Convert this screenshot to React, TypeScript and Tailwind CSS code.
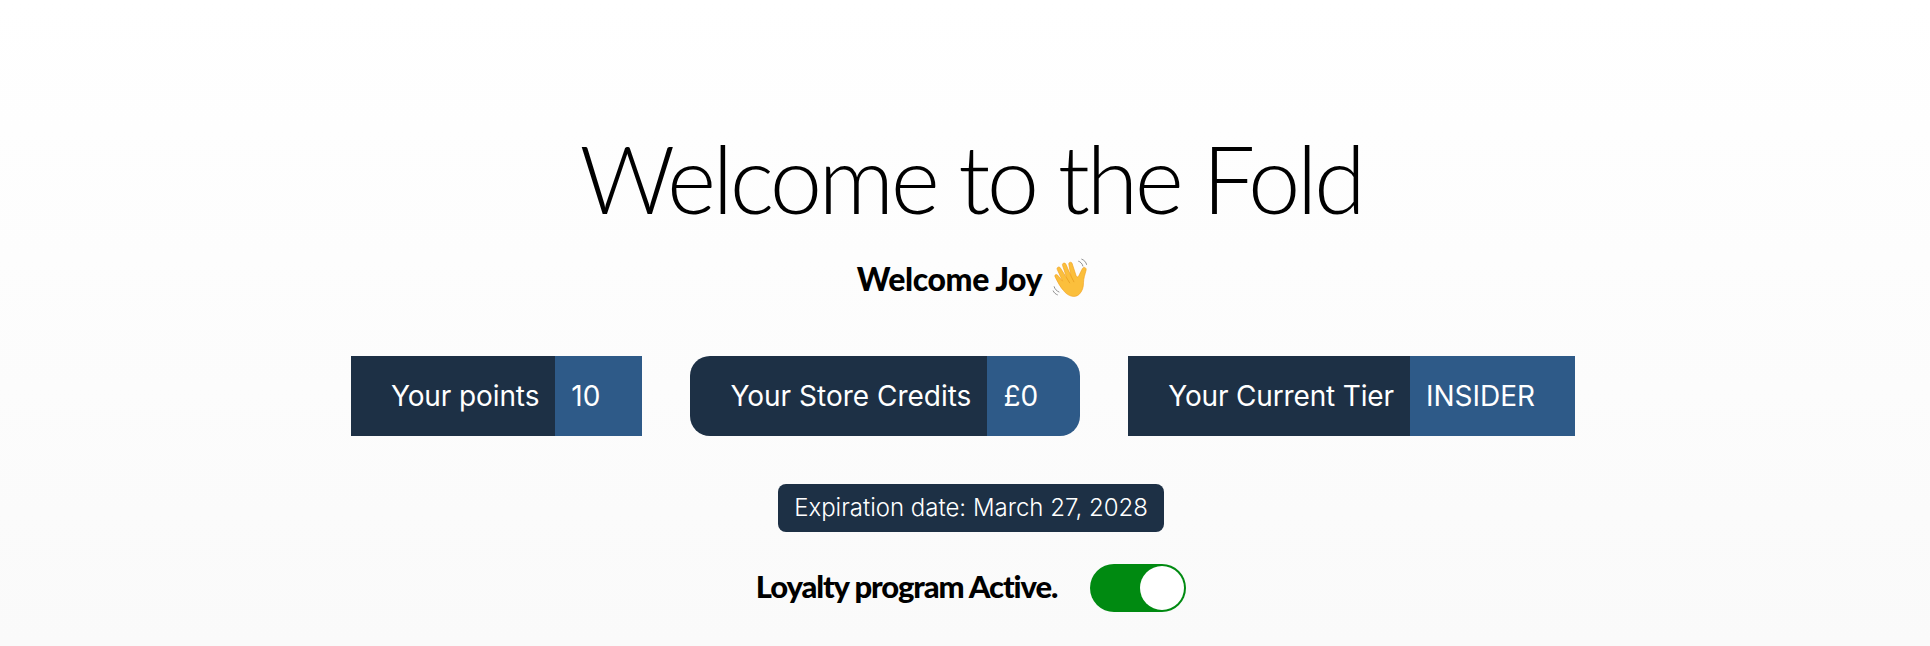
import React from 'react';

function WaveHand() {
  return (
    <svg viewBox="0 0 40 40" className="w-[42px] h-[42px] ml-[10px]" aria-hidden="true">
      <path d="M11 31c-3-3-6-9-8-13-1-2 1-3 2.500-1.500L10 22 5 11c-1-2 2-3.500 3-1.500L14 19 10 7c-.6-2.200 2.500-3 3.300-1L18 17l-2-11c-.4-2.200 2.600-2.800 3.200-.7L23 17c1 2 2 1 3-1l3-6c1-2 4-1 3.500 1.500-1 4-2.500 8-2.500 12 0 4-1 8-4 11-4 4-11 2-15-3.500z" fill="#fbbf3c" stroke="#f0a020" strokeWidth="0.6" />
      <path d="M14 19l3 5M18 17l3 6" stroke="#e8a020" strokeWidth="0.8" fill="none" />
      <path d="M25 3c2 .5 4 2.500 4.500 5M28 1c2.500.8 4.500 3 5 5.500" stroke="#8a8a8a" strokeWidth="0.9" fill="none" />
      <path d="M2 27c.5 2.500 2.500 4.500 5 5.500M1 31c.8 2 2.500 3.500 4.500 4.200" stroke="#8a8a8a" strokeWidth="0.9" fill="none" />
    </svg>
  );
}

function StatBox({ label, value, className = '', labelClass = '', valueClass = 'pr-[40px]' }: { label: string; value: string; className?: string; labelClass?: string; valueClass?: string }) {
  return (
    <div className={`flex h-[80px] overflow-hidden font-['Inter',sans-serif] text-[28px] text-white ${className}`}>
      <div className={`flex items-center bg-[#1d3045] pl-[40px] pr-[16px] ${labelClass}`}>{label}</div>
      <div className={`flex items-center bg-[#2e5a88] pl-[16px] ${valueClass}`}>{value}</div>
    </div>
  );
}

export default function App() {
  return (
    <div className="h-[646px] w-full overflow-hidden bg-gradient-to-b from-white to-[#fafafa] pl-[12px] flex flex-col items-center font-['Lato',sans-serif] text-black">
      <h1 className="mt-[118px] text-[94px] leading-[120px] font-light tracking-[-3.5px]">Welcome to the Fold</h1>
      <div className="mt-[20px] pl-[9px] flex items-center h-[42px] text-[32px] font-black tracking-[-0.4px]">
        <span>Welcome Joy</span>
        <WaveHand />
      </div>
      <div className="mt-[56px] mr-[16px] flex gap-[48px]">
        <StatBox label="Your points" value="10" labelClass="tracking-[-0.1px]" valueClass="pr-[42px]" />
        <StatBox label="Your Store Credits" value="£0" className="rounded-[20px]" valueClass="pr-[42px]" />
        <StatBox label="Your Current Tier" value="INSIDER" labelClass="tracking-[-0.15px]" />
      </div>
      <div className="mt-[48px] h-[48px] flex items-center rounded-[8px] bg-[#1d3045] px-[16px] font-['Inter',sans-serif] text-[24px] font-light text-white">
        Expiration date: March 27, 2028
      </div>
      <div className="mt-[32px] flex items-center gap-[33px]">
        <span className="mb-[5px] text-[31px] leading-[40px] font-black tracking-[-1.1px]">Loyalty program Active.</span>
        <div className="flex justify-end items-center w-[96px] h-[48px] rounded-full bg-[#008a11] p-[2px]">
          <div className="w-[44px] h-[44px] rounded-full bg-white" />
        </div>
      </div>
    </div>
  );
}
